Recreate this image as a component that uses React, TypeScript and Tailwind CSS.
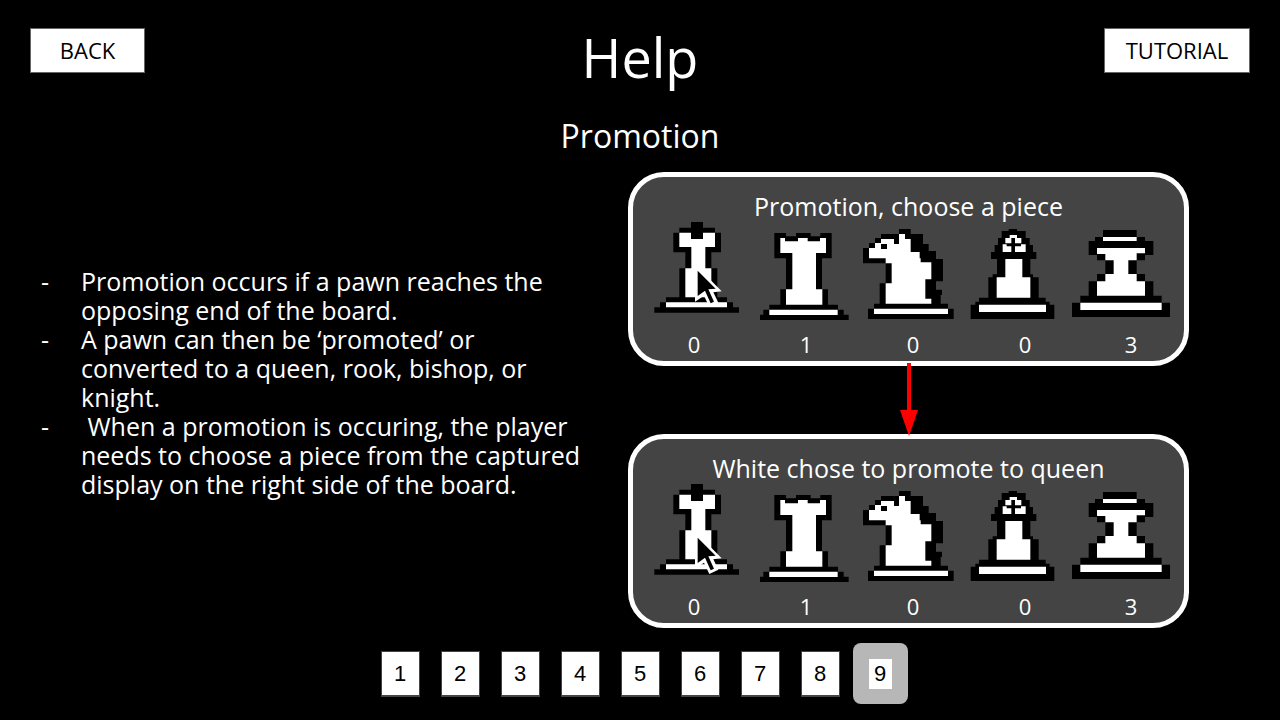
type Piece = { name: string; width: number; body: string; fill: string };

const pieces: Piece[] = [
  {
    name: "King",
    width: 110,
    body: "M153 21H189V38H225V53H243V112H214V160H232V247H261V262H279V277H297V293H43V277H60V262H78V247H118V160H136V112H100V53H118V38H153Z",
    fill: "M118 53H153V72H189V53H225V96H196V160H214V247H136V160H154V96H118ZM78 262H261V277H78Z",
  },
  {
    name: "Rook",
    width: 105,
    body: "M73 54H108V64H138V54H182V64H211V54H245V130H216V223H234V269H264V284H281V299H296V315H30V299H40V284H58V269H91V223H108V130H73Z",
    fill: "M91 69H105V79H144V69H173V79H210V69H228V114H198V223H217V269H108V223H127V114H91ZM58 284H263V300H58Z",
  },
  {
    name: "Knight",
    width: 105,
    body: "M132 42H167V57H204V87H221V108H243V132H264V199H243V224H261V240H257V266H279V281H296V312H39V281H57V266H74V205H92V145H24V99H42V84H60V69H78V57H132Z",
    fill: "M132 57H150V72H167V111H194V130H197V142H229V193H211V251H229V266H92V205H110V145H92V130H42V99H60V84H78V72H117V87H132ZM57 281H279V297H57ZM78 87V102H96V87Z",
  },
  {
    name: "Bishop",
    width: 105,
    body: "M146 42H171V48H197V69H209V90H219V111H229V132H211V178H219V187H236V248H257V260H269V269H283V312H32V269H46V260H57V248H85V187H98V178H111V132H93V111H104V90H114V69H125V48H146Z",
    fill: "M149 60H171V69H184V85H165V69H154V85H136V69H149ZM128 88H140V94H154V111H128ZM165 94H183V88H197V111H165ZM136 132H187V187H211V248H110V187H136ZM57 269H258V291H57Z",
  },
  {
    name: "Queen",
    width: 105,
    body: "M114 45H215V66H240V78H265V120H240V136H215V177H240V199H265V242H290V263H315V306H21V263H46V242H71V199H96V177H121V136H96V120H71V78H90V66H114Z",
    fill: "M114 66H215V78H114ZM96 99H240V115H215V136H190V177H215V199H240V242H96V199H121V177H146V136H121V117H96ZM46 263H290V285H46Z",
  },
];

const counts = [0, 1, 0, 0, 3];

function PieceIcon({ piece, cursorDrop }: { piece: Piece; cursorDrop?: number }) {
  return (
    <svg
      role="img"
      aria-label={piece.name}
      width={piece.width}
      height={102}
      viewBox={`0 18 ${piece.width * 3} 306`}
      className="shrink-0"
    >
      <path d={piece.body} fill="#000" />
      <path d={piece.fill} fill="#fff" fillRule="evenodd" />
      {cursorDrop !== undefined && (
        <g transform={`translate(0 ${cursorDrop})`}>
          <path d="M165 148L245 229L220 232L235 263L208 276L192 242L165 260Z" fill="#fff" />
          <path d="M173 167V243L195 227L212 265L222 260L205 223L227 221Z" fill="#000" />
        </g>
      )}
    </svg>
  );
}

function PromotionCard({ title, cursorDrop }: { title: string; cursorDrop: number }) {
  return (
    <section className="rounded-[36px] border-[5px] border-white bg-[#444] px-[7px] pt-[14px] pb-[3px]">
      <h3 className="text-center text-[25px] leading-[30px]">{title}</h3>
      <div className="flex">
        {pieces.map((p, i) => (
          <PieceIcon key={p.name} piece={p} cursorDrop={i === 0 ? cursorDrop : undefined} />
        ))}
      </div>
      <div className="mt-[7px] grid grid-cols-[108px_116px_98px_126px_86px] text-center text-[22px] leading-[28px]">
        {counts.map((c, i) => (
          <span key={pieces[i].name}>{c}</span>
        ))}
      </div>
    </section>
  );
}

const notes = [
  "Promotion occurs if a pawn reaches the opposing end of the board.",
  "A pawn can then be ‘promoted’ or converted to a queen, rook, bishop, or knight.",
  "\u00a0When a promotion is occuring, the player needs to choose a piece from the captured display on the right side of the board.",
];

const pages = [1, 2, 3, 4, 5, 6, 7, 8, 9];

export default function App() {
  return (
    <div className="flex min-h-screen flex-col bg-black font-['Open_Sans','Noto_Sans',sans-serif] text-white">
      <header className="grid grid-cols-[1fr_auto_1fr] items-start px-[30px] pt-7">
        <button className="h-[45px] w-[115px] justify-self-start border border-[#666] bg-white pb-[2px] text-[22px] leading-[30px] text-black">
          BACK
        </button>
        <h1 className="text-[54px] leading-[58px]">Help</h1>
        <button className="h-[45px] w-[146px] justify-self-end border border-[#666] bg-white pb-[2px] text-[22px] leading-[30px] text-black">
          TUTORIAL
        </button>
      </header>
      <h2 className="mt-7 text-center text-[32px] leading-[44px]">Promotion</h2>
      <main className="mt-[14px] flex items-center pr-[91px] pl-[41px]">
        <ul className="mr-auto w-[550px] pb-[34px] text-[25px] leading-[29px]">
          {notes.map((note) => (
            <li key={note} className="flex">
              <span className="w-10 shrink-0">-</span>
              <span>{note}</span>
            </li>
          ))}
        </ul>
        <div className="flex w-[561px] shrink-0 flex-col">
          <PromotionCard title="Promotion, choose a piece" cursorDrop={0} />
          <svg width="20" height="74" viewBox="0 0 20 74" className="relative z-10 -my-[3px] self-center" aria-hidden="true">
            <path d="M8 0H12V47H19L10 73L1 47H8Z" fill="#f00" />
          </svg>
          <PromotionCard title="White chose to promote to queen" cursorDrop={15} />
        </div>
      </main>
      <nav
        aria-label="Help pages"
        className="mt-[15px] flex items-center justify-center gap-[21px] pb-4 pl-2 font-['Liberation_Sans',sans-serif] text-[22px] leading-[30px] text-black"
      >
        {pages.map((n) =>
          n === 9 ? (
            <button
              key={n}
              aria-current="page"
              className="-ml-2 flex h-[61px] w-[55px] items-center justify-center rounded-lg bg-[#b7b7b7]"
            >
              <span className="w-[23px] bg-white">{n}</span>
            </button>
          ) : (
            <button key={n} className="h-[46px] w-[39px] border border-b-2 border-[#444] bg-white pt-[2px]">
              {n}
            </button>
          ),
        )}
      </nav>
    </div>
  );
}
